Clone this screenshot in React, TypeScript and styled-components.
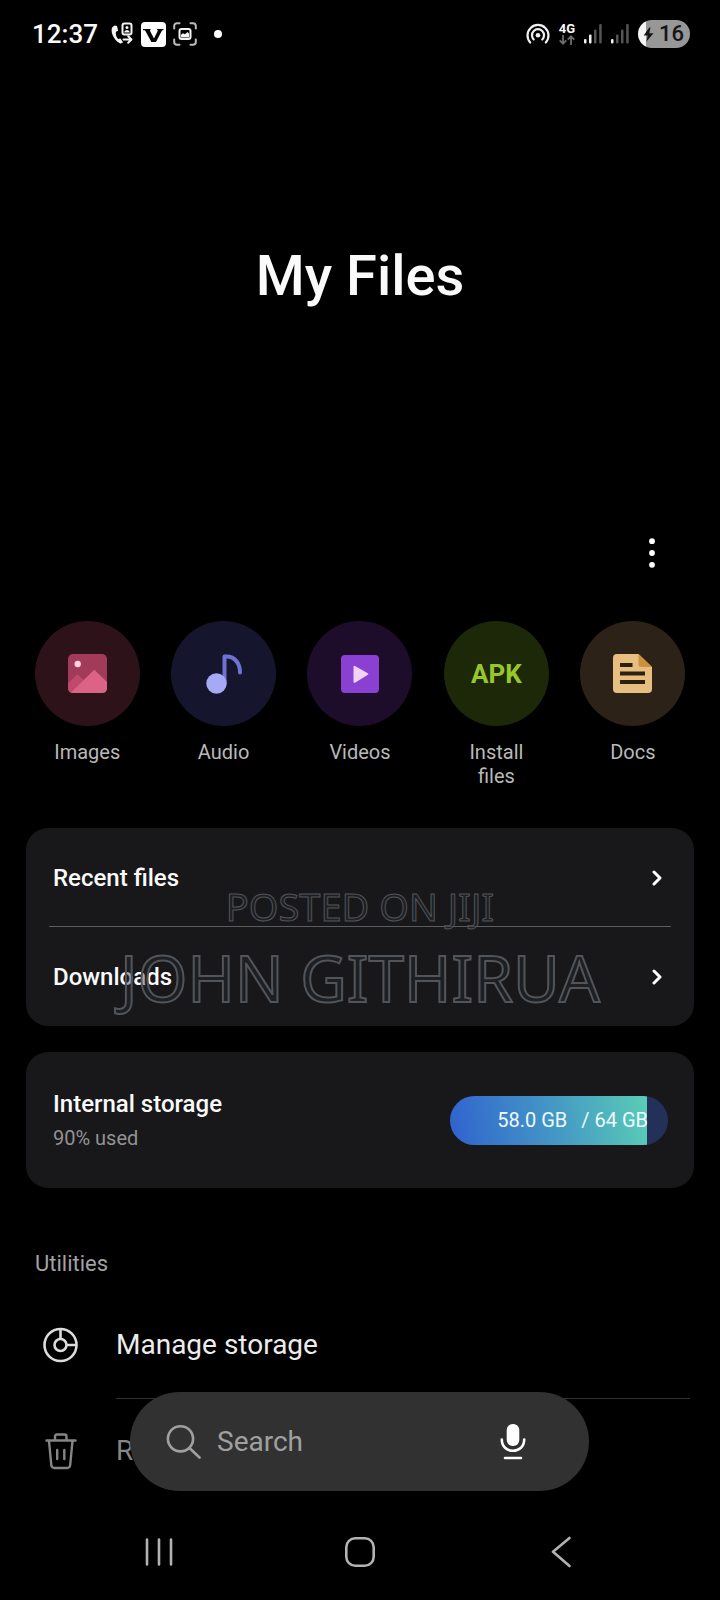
import React from "react";
import styled, { createGlobalStyle } from "styled-components";

const GlobalStyle = createGlobalStyle`
  * { box-sizing: border-box; }
  body { margin: 0; background: #000; }
  button, input { font: inherit; color: inherit; }
`;

const Screen = styled.div`
  display: flex;
  flex-direction: column;
  min-height: 100vh;
  background: #000;
  color: #fafafa;
  font-family: Roboto, "Noto Sans", sans-serif;
`;

const IconButton = styled.button`
  display: flex;
  align-items: center;
  justify-content: center;
  width: 48px;
  height: 48px;
  padding: 0;
  border: 0;
  background: none;
  cursor: pointer;
`;

/* Status bar */
const StatusBar = styled.header`
  display: flex;
  align-items: center;
  justify-content: space-between;
  height: 68px;
  padding: 0 30px 0 32px;
`;
const StatusGroup = styled.div<{ $gap: number }>`
  display: flex;
  align-items: center;
  gap: ${(p) => p.$gap}px;
`;
const Clock = styled.time`
  margin-right: 5px;
  font-size: 26px;
  line-height: 32px;
  font-weight: 500;
`;
const Network = styled.div`
  display: flex;
  flex-direction: column;
  align-items: center;
  font-size: 13px;
  line-height: 12px;
  font-weight: 700;
`;
const Battery = styled.div`
  display: flex;
  align-items: center;
  justify-content: space-between;
  width: 52px;
  height: 28px;
  padding: 0 6px 0 5px;
  border-radius: 14px;
  background: linear-gradient(90deg, #f4f4f4 8px, #979797 8px);
  color: #161616;
  font-size: 22px;
  line-height: 28px;
  font-weight: 500;
`;

/* Title */
const Hero = styled.div`
  padding: 176px 24px 221px;
  text-align: center;
`;
const Title = styled.h1`
  margin: 0;
  font-size: 56px;
  line-height: 64px;
  font-weight: 500;
`;
const Toolbar = styled.div`
  display: flex;
  justify-content: flex-end;
  padding: 0 44px 44px;
`;

/* Categories */
const Categories = styled.nav`
  display: grid;
  grid-template-columns: repeat(5, 1fr);
  padding: 0 19px 40px;
`;
const Category = styled.a`
  display: flex;
  flex-direction: column;
  align-items: center;
  gap: 14px;
  color: #b9b9b9;
  font-size: 20px;
  line-height: 24px;
  text-align: center;
  text-decoration: none;
`;
const Disc = styled.span<{ $color: string }>`
  display: flex;
  align-items: center;
  justify-content: center;
  width: 105px;
  height: 105px;
  border-radius: 50%;
  background: ${(p) => p.$color};
`;
const ApkMark = styled.span`
  color: #98c72c;
  font-size: 26px;
  line-height: 32px;
  font-weight: 700;
`;
const CategoryLabel = styled.span`
  max-width: 80px;
`;

/* Cards */
const Cards = styled.div`
  display: flex;
  flex-direction: column;
  gap: 26px;
  padding: 0 26px;
`;
const Card = styled.section`
  position: relative;
  border-radius: 22px;
  background: #18181a;
`;
const ShortcutRow = styled.a`
  display: flex;
  align-items: center;
  justify-content: space-between;
  height: 99px;
  padding: 0 32px 0 27px;
  color: inherit;
  font-size: 24px;
  line-height: 32px;
  font-weight: 500;
  text-decoration: none;
`;
const CardDivider = styled.hr`
  height: 1px;
  margin: -1px 23px 0;
  border: 0;
  background: #5c5c5e;
`;
const Watermark = styled.div`
  position: absolute;
  inset: 54px 0 0;
  display: flex;
  flex-direction: column;
  align-items: center;
  color: rgba(36, 46, 54, 0.4);
  font-family: "Noto Sans", sans-serif;
  white-space: nowrap;
  pointer-events: none;
`;
const WatermarkLine = styled.span<{ $size: number; $line: number; $stroke: number }>`
  font-size: ${(p) => p.$size}px;
  line-height: ${(p) => p.$line}px;
  -webkit-text-stroke: ${(p) => p.$stroke}px #535458;
`;
const StorageLink = styled.a`
  display: flex;
  align-items: center;
  justify-content: space-between;
  height: 136px;
  padding: 0 26px 0 27px;
  color: inherit;
  text-decoration: none;
`;
const StorageName = styled.div`
  font-size: 24px;
  line-height: 36px;
  font-weight: 500;
`;
const StorageNote = styled.div`
  color: #929294;
  font-size: 20px;
  line-height: 32px;
`;
const Meter = styled.div`
  display: flex;
  align-items: center;
  justify-content: flex-end;
  gap: 14px;
  width: 218px;
  height: 49px;
  padding-right: 20px;
  border-radius: 25px;
  background:
    linear-gradient(80deg, #3062cf, #459ac4 55%, #5acdb6) 0 0 / 197px 100% no-repeat,
    #22305a;
  color: #eefaff;
  font-size: 20px;
  line-height: 28px;
`;

/* Utilities */
const SectionTitle = styled.h2`
  margin: 62px 35px 14px;
  color: #a2a2a2;
  font-size: 22px;
  line-height: 28px;
  font-weight: 400;
`;
const UtilityRow = styled.a<{ $dim?: boolean }>`
  display: flex;
  align-items: center;
  gap: 36px;
  height: 106px;
  padding: 0 40px;
  color: ${(p) => (p.$dim ? "#858585" : "#ececec")};
  font-size: 28px;
  line-height: 36px;
  text-decoration: none;
`;
const UtilityDivider = styled.hr`
  height: 1px;
  margin: 0 30px -1px 116px;
  border: 0;
  background: #303030;
`;

/* Bottom area */
const Bottom = styled.footer`
  position: relative;
  margin-top: auto;
`;
const SearchBar = styled.form`
  position: absolute;
  left: 130px;
  right: 131px;
  bottom: 109px;
  display: flex;
  align-items: center;
  gap: 16px;
  height: 99px;
  padding: 0 52px 0 36px;
  border-radius: 50px;
  background: #313131;
`;
const SearchInput = styled.input`
  flex: 1;
  min-width: 0;
  height: 48px;
  padding: 0;
  border: 0;
  outline: 0;
  background: none;
  font-size: 28px;
  &::placeholder { color: #a0a0a0; opacity: 1; }
`;
const NavBar = styled.nav`
  display: flex;
  align-items: center;
  justify-content: space-between;
  height: 96px;
  padding: 0 135px;
`;

const ContactCallIcon = () => (
  <svg width="24" height="26" viewBox="0 0 24 26" fill="none">
    <path d="M4.5 4.6 2.3 6.2C.2 10 3 18.4 9.8 22.2c1 .5 2.200.1 3.200-.9l-2.600-3.900-2.200.7C6.200 16.200 5.400 13 6 10.700l2.100-.9L7 5.100Z" fill="#f4f4f4" />
    <rect x="12.500" y="2.500" width="9" height="11" rx="2" stroke="#f4f4f4" strokeWidth="2" />
    <circle cx="17" cy="6.400" r="1.500" fill="#f4f4f4" />
    <path d="M14.300 11.500c0-3.500 5.400-3.500 5.400 0Z" fill="#f4f4f4" />
    <path d="M13.500 18.500h7.500M18.200 15.300l3.300 3.200-3.300 3.200" stroke="#f4f4f4" strokeWidth="2" strokeLinecap="round" strokeLinejoin="round" />
  </svg>
);
const VIcon = () => (
  <svg width="25" height="25" viewBox="0 0 25 25">
    <rect width="25" height="25" rx="4" fill="#fff" />
    <path d="M2 7h7.500v1.200h-.8l4.300 8.300L17 8.200h-.8V7h6.200v1.200h-1.300L15 20h-4.600L4 8.200H2Z" fill="#050505" />
  </svg>
);
const CaptureIcon = () => (
  <svg width="24" height="24" viewBox="0 0 24 24" fill="none">
    <path d="M1.200 6.500V4a2.800 2.800 0 0 1 2.800-2.800h2.500M17.500 1.200H20A2.800 2.800 0 0 1 22.800 4v2.500M22.800 17.500V20a2.800 2.800 0 0 1-2.800 2.800h-2.500M6.500 22.800H4A2.800 2.800 0 0 1 1.200 20v-2.500" stroke="#bcbcbc" strokeWidth="2" strokeLinecap="round" />
    <rect x="6.500" y="7" width="11" height="10" rx="2" stroke="#f4f4f4" strokeWidth="2" />
    <path d="M8 15.500v-2.800l2-1.500 2 1 2.500-2.200 1.500 1.500v4Z" fill="#f4f4f4" />
  </svg>
);
const MoreDot = () => (
  <svg width="8" height="8" viewBox="0 0 8 8"><circle cx="4" cy="4" r="4" fill="#fff" /></svg>
);
const HotspotIcon = () => (
  <svg width="24" height="22" viewBox="0 0 24 22" fill="none" stroke="#f2f2f2" strokeWidth="2.200" strokeLinecap="round">
    <path d="M4.200 19.500a10.500 10.500 0 1 1 15.600 0" />
    <path d="M7.700 16.400a6 6 0 1 1 8.600 0" />
    <circle cx="12" cy="12.200" r="2.300" fill="#f2f2f2" stroke="none" />
  </svg>
);
const DataArrows = () => (
  <svg width="16" height="10" viewBox="0 0 16 10" fill="none" stroke="#6c6c6c" strokeWidth="1.800">
    <path d="M4 0v8.500M.7 5.300 4 8.700l3.300-3.400M12 10V1.300M8.700 4.700 12 1.300l3.300 3.400" />
  </svg>
);
const SignalIcon = () => (
  <svg width="18" height="20" viewBox="0 0 18 20">
    <rect x="0" y="15" width="2.500" height="4.500" rx="1" fill="#f2f2f2" />
    <rect x="5" y="10.500" width="2.500" height="9" rx="1" fill="#f2f2f2" />
    <rect x="10" y="5.500" width="2.500" height="14" rx="1" fill="#555" />
    <rect x="15.200" y="0" width="2.500" height="19.500" rx="1" fill="#555" />
  </svg>
);
const WeakSignalIcon = () => (
  <svg width="18" height="20" viewBox="0 0 18 20">
    <rect x="0" y="15" width="2.500" height="4.500" rx="1" fill="#f2f2f2" />
    <rect x="5" y="10.500" width="2.500" height="9" rx="1" fill="#555" />
    <rect x="10" y="5.500" width="2.500" height="14" rx="1" fill="#555" />
    <rect x="15.200" y="0" width="2.500" height="19.500" rx="1" fill="#555" />
  </svg>
);
const BoltIcon = () => (
  <svg width="11" height="15" viewBox="0 0 11 15"><path d="M6.300.5.700 8.500h4L3.500 14.500 10.500 6.300H6.300L7.500.5Z" fill="#161616" /></svg>
);
const MenuIcon = () => (
  <svg width="6" height="30" viewBox="0 0 6 30" fill="#fff">
    <circle cx="3" cy="3.200" r="2.900" /><circle cx="3" cy="15" r="2.900" /><circle cx="3" cy="26.800" r="2.900" />
  </svg>
);
const ImagesIcon = () => (
  <svg width="39" height="39" viewBox="0 0 39 39">
    <rect width="39" height="39" rx="5" fill="#a23b5a" />
    <path d="M0 29.500 9.200 20.300 17 27 5 39Q0 39 0 34Z" fill="#bf4a6e" />
    <path d="M3 38.500 26.200 15.700 39 28v6q0 5-5 5H5Z" fill="#dd6386" />
    <circle cx="9.700" cy="10" r="3.200" fill="#fbd3de" />
  </svg>
);
const AudioIcon = () => (
  <svg width="36" height="40" viewBox="0 0 36 40" fill="none">
    <path d="M18.500 30V2.500h2c8.500 0 13.500 7 13.500 16" stroke="#6d72d3" strokeWidth="4" strokeLinejoin="round" strokeLinecap="round" />
    <circle cx="10.500" cy="29.500" r="10.200" fill="#a6a9f3" />
  </svg>
);
const VideosIcon = () => (
  <svg width="38" height="38" viewBox="0 0 38 38">
    <rect width="38" height="38" rx="4" fill="#8a40d0" />
    <path d="M13.500 11.800 26.300 19 13.500 26.800Z" fill="#f0d2fb" stroke="#f0d2fb" strokeWidth="2" strokeLinejoin="round" />
  </svg>
);
const DocsIcon = () => (
  <svg width="39" height="39" viewBox="0 0 39 39">
    <path d="M4 0H25.500L39 13V35q0 4-4 4H4q-4 0-4-4V4Q0 0 4 0Z" fill="#e8bd80" />
    <path d="M25.500 0 39 13H28q-2.500 0-2.500-2.500Z" fill="#cb923c" />
    <path d="M7 9h12.500v4H7ZM7 17.500h25v4H7ZM7 26h25v4H7Z" fill="#2c2013" />
  </svg>
);
const Chevron = () => (
  <svg width="10" height="16" viewBox="0 0 10 16" fill="none"><path d="m2 2 6 6-6 6" stroke="#fff" strokeWidth="3" strokeLinecap="round" strokeLinejoin="round" /></svg>
);
const StorageIcon = () => (
  <svg width="40" height="40" viewBox="0 0 40 40" fill="none" stroke="#dcdcdc" strokeWidth="2.600">
    <circle cx="20.500" cy="20" r="16" /><circle cx="20.500" cy="20" r="6" /><path d="M20.500 4v10M26.500 20h10" />
  </svg>
);
const TrashIcon = () => (
  <svg width="40" height="40" viewBox="0 0 40 40" fill="none" stroke="#858585" strokeWidth="2.400" strokeLinecap="round" strokeLinejoin="round">
    <path d="M6.500 9.500h29M15 9V5.500q0-2 2-2h7.500q2 0 2 2V9M9 10l2.300 24q.3 3 3.200 3h12.500q2.900 0 3.200-3L32.500 10M17.200 19v9M24.300 19v9" />
  </svg>
);
const SearchIcon = () => (
  <svg width="35" height="35" viewBox="0 0 35 35" fill="none" stroke="#a0a0a0" strokeWidth="2.600" strokeLinecap="round">
    <circle cx="14.500" cy="14.800" r="12.600" /><path d="m23.500 24 10 9.500" />
  </svg>
);
const MicIcon = () => (
  <svg width="26" height="36" viewBox="0 0 26 36" fill="none" stroke="#fff" strokeWidth="2.600" strokeLinecap="round">
    <rect x="6.700" y="0" width="12.600" height="22" rx="6" fill="#fff" stroke="none" />
    <path d="M1.800 15.500c0 15 22.400 15 22.400 0M5 34h16" />
  </svg>
);
const RecentsIcon = () => (
  <svg width="28" height="28" viewBox="0 0 28 28" stroke="#b2b2b2" strokeWidth="2.600" strokeLinecap="round"><path d="M2 1.500v25M14 1.500v25M26 1.500v25" /></svg>
);
const HomeIcon = () => (
  <svg width="32" height="32" viewBox="0 0 32 32" fill="none"><rect x="2.300" y="2.300" width="27.400" height="27.400" rx="9" stroke="#b2b2b2" strokeWidth="2.600" /></svg>
);
const BackIcon = () => (
  <svg width="20" height="32" viewBox="0 0 20 32" fill="none"><path d="M18.500 2 2 15.800 18.500 30" stroke="#b2b2b2" strokeWidth="2.600" strokeLinecap="round" strokeLinejoin="round" /></svg>
);

const categories = [
  { label: "Images", color: "#2d121a", icon: <ImagesIcon /> },
  { label: "Audio", color: "#15162e", icon: <AudioIcon /> },
  { label: "Videos", color: "#1d0d2a", icon: <VideosIcon /> },
  { label: "Install files", color: "#1d2808", icon: <ApkMark>APK</ApkMark> },
  { label: "Docs", color: "#2c2217", icon: <DocsIcon /> },
];

export default function App() {
  return (
    <Screen>
      <GlobalStyle />
      <StatusBar>
        <StatusGroup $gap={7}>
          <Clock>12:37</Clock>
          <ContactCallIcon />
          <VIcon />
          <CaptureIcon />
          <StatusGroup $gap={0}>
            <svg width="10" height="8" />
            <MoreDot />
          </StatusGroup>
        </StatusGroup>
        <StatusGroup $gap={9}>
          <HotspotIcon />
          <Network>
            4G
            <DataArrows />
          </Network>
          <SignalIcon />
          <WeakSignalIcon />
          <Battery>
            <BoltIcon />
            16
          </Battery>
        </StatusGroup>
      </StatusBar>

      <main>
        <Hero>
          <Title>My Files</Title>
        </Hero>
        <Toolbar>
          <IconButton type="button" aria-label="More options"><MenuIcon /></IconButton>
        </Toolbar>

        <Categories>
          {categories.map((c) => (
            <Category key={c.label} href="#">
              <Disc $color={c.color}>{c.icon}</Disc>
              <CategoryLabel>{c.label}</CategoryLabel>
            </Category>
          ))}
        </Categories>

        <Cards>
          <Card>
            <ShortcutRow href="#">Recent files<Chevron /></ShortcutRow>
            <CardDivider />
            <ShortcutRow href="#">Downloads<Chevron /></ShortcutRow>
            <Watermark>
              <WatermarkLine $size={38} $line={48} $stroke={1}>POSTED ON JIJI</WatermarkLine>
              <WatermarkLine $size={64} $line={96} $stroke={2}>JOHN GITHIRUA</WatermarkLine>
            </Watermark>
          </Card>
          <Card>
            <StorageLink href="#">
              <div>
                <StorageName>Internal storage</StorageName>
                <StorageNote>90% used</StorageNote>
              </div>
              <Meter>
                <span>58.0 GB</span>
                <span>/ 64 GB</span>
              </Meter>
            </StorageLink>
          </Card>
        </Cards>

        <SectionTitle>Utilities</SectionTitle>
        <UtilityRow href="#"><StorageIcon />Manage storage</UtilityRow>
        <UtilityDivider />
        <UtilityRow href="#" $dim><TrashIcon />Recycle bin</UtilityRow>
      </main>

      <Bottom>
        <SearchBar>
          <SearchIcon />
          <SearchInput type="text" placeholder="Search" aria-label="Search" />
          <IconButton type="button" aria-label="Voice search"><MicIcon /></IconButton>
        </SearchBar>
        <NavBar>
          <IconButton type="button" aria-label="Recents"><RecentsIcon /></IconButton>
          <IconButton type="button" aria-label="Home"><HomeIcon /></IconButton>
          <IconButton type="button" aria-label="Back"><BackIcon /></IconButton>
        </NavBar>
      </Bottom>
    </Screen>
  );
}
